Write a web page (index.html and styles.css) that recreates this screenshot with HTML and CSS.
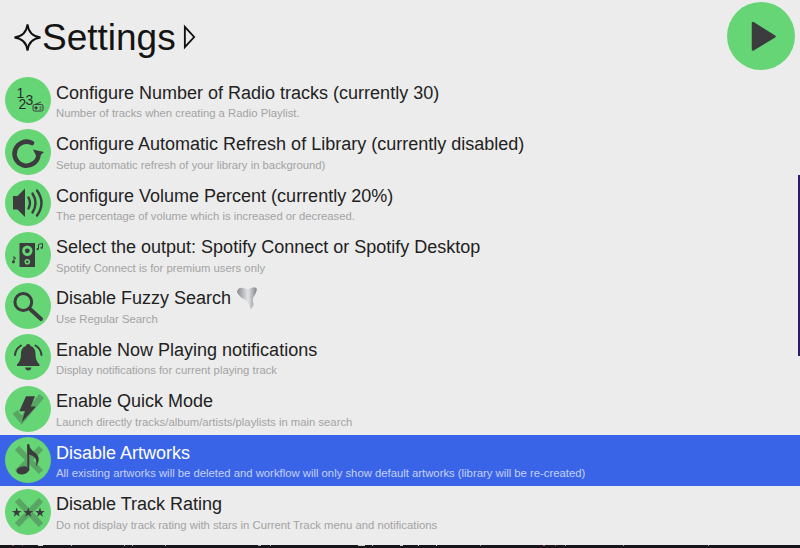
FILE: index.html
```html
<!DOCTYPE html>
<html lang="en">
<head>
<meta charset="utf-8">
<title>Settings</title>
<link rel="stylesheet" href="styles.css">
</head>
<body>
<div class="window">
  <header class="header">
    <div class="heading">
      <svg class="sparkle" viewBox="0 0 30 30"><path d="M15 1.500C16 10 20 14 28.500 15C20 16 16 20 15 28.500C14 20 10 16 1.500 15C10 14 14 10 15 1.500Z"/></svg>
      <h1 class="title">Settings</h1>
      <svg class="caret" viewBox="0 0 14 26"><path d="M2 2L12 13L2 24Z"/></svg>
    </div>
    <div class="play"><svg viewBox="0 0 68 68"><path d="M26 21L26 47.500L47.500 34.500Z"/></svg></div>
  </header>
  <ul class="list">
    <li class="row">
      <span class="icon"><svg viewBox="0 0 46 46">
        <text class="digit" x="11.500 13.500 20.500" y="21 31.500 28">123</text>
        <rect class="thin" x="28" y="27.500" width="10" height="6.500" rx="1.500"/><circle class="fill" cx="31" cy="30.800" r="1.600"/><path class="thin" d="M34.500 30h2M34.500 32h2M30 27.500L36 25"/>
      </svg></span>
      <div class="text"><div class="name">Configure Number of Radio tracks (currently 30)</div><div class="sub">Number of tracks when creating a Radio Playlist.</div></div>
    </li>
    <li class="row">
      <span class="icon"><svg viewBox="0 0 46 46">
        <path class="line" d="M27 14A12 12 0 1 0 33.500 26" stroke-width="4.600"/><path class="fill" d="M28 20.500L39 23L32.300 29Z"/>
      </svg></span>
      <div class="text"><div class="name">Configure Automatic Refresh of Library (currently disabled)</div><div class="sub">Setup automatic refresh of your library in background)</div></div>
    </li>
    <li class="row">
      <span class="icon"><svg viewBox="0 0 46 46">
        <path class="fill" d="M8 16H12.500L20 8.500V37L12.500 29.500H8Z"/>
        <path class="line" stroke-width="2.400" d="M23.500 17.500Q26.500 23 23.500 28.500M27.500 13.500Q33.500 23 27.500 32.500M32 10.500Q41 23 32 35.500"/>
      </svg></span>
      <div class="text"><div class="name">Configure Volume Percent (currently 20%)</div><div class="sub">The percentage of volume which is increased or decreased.</div></div>
    </li>
    <li class="row">
      <span class="icon"><svg viewBox="0 0 46 46">
        <rect class="fill" x="14.500" y="11" width="15.500" height="24"/>
        <circle class="hole" cx="22.300" cy="18.800" r="5.200"/><circle class="fill" cx="22.300" cy="18.800" r="2.400"/><circle class="hole" cx="22.300" cy="29.800" r="2.800"/><circle class="fill" cx="22.300" cy="29.800" r="1.200"/>
        <path class="thin" d="M33.500 17V12.500L37.500 11.500V15.500"/><circle class="fill" cx="32.600" cy="17.200" r="1.100"/><circle class="fill" cx="36.600" cy="15.800" r="1.100"/>
        <path class="thin" d="M9 30V24.500Q10 26 11 27"/><circle class="fill" cx="8.300" cy="30" r="1.400"/>
      </svg></span>
      <div class="text"><div class="name">Select the output: Spotify Connect or Spotify Desktop</div><div class="sub">Spotify Connect is for premium users only</div></div>
    </li>
    <li class="row">
      <span class="icon"><svg viewBox="0 0 46 46">
        <circle class="line" cx="18.300" cy="19" r="8.400" stroke-width="3"/><path class="line" stroke-width="4" d="M25 26L36 36"/>
      </svg></span>
      <div class="text"><div class="name">Disable Fuzzy Search
        <svg class="tornado" viewBox="0 0 22 23"><defs><linearGradient id="tg" x1="0" x2="1" y1="0" y2="0"><stop offset="0" stop-color="#85888c"/><stop offset=".55" stop-color="#e4e5e8"/><stop offset="1" stop-color="#7d8084"/></linearGradient></defs><path fill="url(#tg)" d="M1 5Q2 0 7 1Q12 3 15 1Q19 -1 21 2Q20 7 17.500 10Q16 13 17.500 17Q17 21 14 22Q14 17 10 13Q3 10 1 5Z"/></svg>
      </div><div class="sub">Use Regular Search</div></div>
    </li>
    <li class="row">
      <span class="icon"><svg viewBox="0 0 46 46">
        <path class="fill" d="M23.300 10C25 10 25.500 11 25.500 12C29 13 30.500 16 30.500 20C30.500 25 32 28 34.500 30.500V32H12V30.500C14.500 28 16 25 16 20C16 16 17.500 13 21 12C21 11 21.500 10 23.300 10Z"/>
        <path class="fill" d="M20 33.500H26.500C26 35.500 25 36.500 23.300 36.500C21.500 36.500 20.500 35.500 20 33.500Z"/>
        <path class="line" stroke-width="2" d="M10 21Q10.500 15 16 11.500M30.500 11.500Q36 15 36.500 21"/>
      </svg></span>
      <div class="text"><div class="name">Enable Now Playing notifications</div><div class="sub">Display notifications for current playing track</div></div>
    </li>
    <li class="row">
      <span class="icon"><svg viewBox="0 0 46 46">
        <path class="faint" d="M10 26L16.700 34L36.700 10"/>
        <path class="fill" d="M21 10.300H30L25.700 20.600H31L16.700 36.300L20 25.300H14.300Z"/>
      </svg></span>
      <div class="text"><div class="name">Enable Quick Mode</div><div class="sub">Launch directly tracks/album/artists/playlists in main search</div></div>
    </li>
    <li class="row selected">
      <span class="icon"><svg viewBox="0 0 46 46">
        <path class="faint" d="M12 11L36 35M36 11L12 35"/>
        <ellipse class="fill" cx="17.700" cy="33.300" rx="6.300" ry="4" transform="rotate(-12 17.700 33.300)"/>
        <path class="line" stroke-width="2" d="M23.300 33V8"/>
        <path class="fill" d="M22.300 7.500H24C25 12 28 14 31 16.500C35 20 34.500 25 30.500 30C32 25.500 31.500 21.500 28.500 19.500C27 18.500 25 18 24 17.500L22.300 17Z"/>
      </svg></span>
      <div class="text"><div class="name">Disable Artworks</div><div class="sub">All existing artworks will be deleted and workflow will only show default artworks (library will be re-created)</div></div>
    </li>
    <li class="row">
      <span class="icon"><svg viewBox="0 0 46 46">
        <path class="faint" d="M12 11L36 36M36 11L12 36"/>
        <path class="fill" d="M11.700 18.500L12.900 22H16.500L13.600 24.200L14.700 27.700L11.700 25.600L8.700 27.700L9.800 24.200L6.900 22H10.500Z"/>
        <path class="fill" d="M23.300 18.500L24.500 22H28.100L25.200 24.200L26.300 27.700L23.300 25.600L20.300 27.700L21.400 24.200L18.500 22H22.100Z"/>
        <path class="fill" d="M35 18.500L36.200 22H39.800L36.900 24.200L38 27.700L35 25.600L32 27.700L33.100 24.200L30.200 22H33.800Z"/>
      </svg></span>
      <div class="text"><div class="name">Disable Track Rating</div><div class="sub">Do not display track rating with stars in Current Track menu and notifications</div></div>
    </li>
  </ul>
  <div class="desktop"></div>
  <div class="scrollbar"></div>
</div>
</body>
</html>
```
FILE: styles.css
```css
* { box-sizing: border-box; }
html, body { margin: 0; padding: 0; }
body { width: 800px; height: 548px; overflow: hidden; background: #ececec; font-family: "Liberation Sans", Arial, sans-serif; }
.window { position: relative; display: flex; flex-direction: column; height: 548px; }
.header { display: flex; justify-content: space-between; height: 74.6px; padding: 2px 5px 0 13px; }
.heading { display: flex; align-items: center; height: 70px; }
.sparkle { width: 29px; height: 29px; fill: none; stroke: #111; stroke-width: 2; }
.title { margin: 0; font: 300 37px/1 "Liberation Sans", Arial, sans-serif; color: #141414; }
.caret { width: 13px; height: 26px; margin-left: 7px; fill: none; stroke: #111; stroke-width: 2; }
.play { width: 68px; height: 68px; border-radius: 50%; background: #66d575; }
.play svg { display: block; width: 68px; height: 68px; fill: #3c3c3e; stroke: #3c3c3e; stroke-width: 2.5; stroke-linejoin: round; }
.list { list-style: none; margin: 0; padding: 0; }
.row { display: flex; align-items: center; height: 51.43px; padding-left: 5px; }
.icon { flex: none; width: 46px; height: 46px; border-radius: 50%; background: #66d575; }
.icon svg { display: block; width: 46px; height: 46px; }
.text { margin: 0 0 1px 5px; }
.name { display: flex; align-items: center; gap: 5px; height: 27px; padding-top: 1px; font-size: 18px; line-height: 27px; color: #222; white-space: nowrap; }
.sub { height: 14px; font-size: 11.3px; line-height: 14px; color: #a3a3a3; white-space: nowrap; }
.selected { background: #3a64e8; }
.selected .name { color: #fff; }
.selected .sub { color: #c5d2fa; }
.tornado { width: 22px; height: 23px; }
.fill { fill: #3c3c3e; }
.hole { fill: #66d575; }
.line { fill: none; stroke: #3c3c3e; stroke-linecap: round; }
.thin { fill: none; stroke: #3c3c3e; stroke-width: 1; }
.faint { fill: none; stroke: #3c3c3e; stroke-width: 6; opacity: .3; }
.digit { font: 400 14px "Liberation Sans", Arial, sans-serif; fill: #2c2c2e; }
.desktop {
  flex: 1;
  margin-top: 8px;
  background-color: #15151b;
  background-image: linear-gradient(90deg,
    transparent 12px, #b5354a 12px, #b5354a 14px, transparent 14px,
    transparent 22px, #b5354a 22px, #b5354a 23px, transparent 23px,
    transparent 38px, #d8d8d8 38px, #d8d8d8 43px, transparent 43px,
    transparent 71px, #bbb 71px, #bbb 72px, transparent 72px,
    transparent 124px, #aaa 124px, #aaa 125px, transparent 125px,
    transparent 132px, #aaa 132px, #aaa 133px, transparent 133px,
    transparent 165px, #aaa 165px, #aaa 166px, transparent 166px,
    transparent 258px, #aaa 258px, #aaa 261px, transparent 261px,
    transparent 270px, #aaa 270px, #aaa 271px, transparent 271px,
    transparent 358px, #ccc 358px, #ccc 365px, transparent 365px,
    transparent 372px, #bbb 372px, #bbb 373px, transparent 373px,
    transparent 400px, #ccc 400px, #ccc 403px, transparent 403px,
    transparent 418px, #ccc 418px, #ccc 419px, transparent 419px,
    transparent 436px, #ddd 436px, #ddd 437px, transparent 437px,
    transparent 480px, #999 480px, #999 481px, transparent 481px,
    transparent 543px, #c0405a 543px, #c0405a 545px, transparent 545px,
    transparent 555px, #c0405a 555px, #c0405a 556px, transparent 556px,
    transparent 565px, #999 565px, #999 566px, transparent 566px,
    transparent 623px, #999 623px, #999 624px, transparent 624px,
    transparent 708px, #999 708px, #999 709px, transparent 709px);
  background-size: 100% 1px;
  background-repeat: no-repeat;
}
.scrollbar { position: absolute; top: 175px; right: 0; width: 2px; height: 181px; background: #2e1a66; }
```
